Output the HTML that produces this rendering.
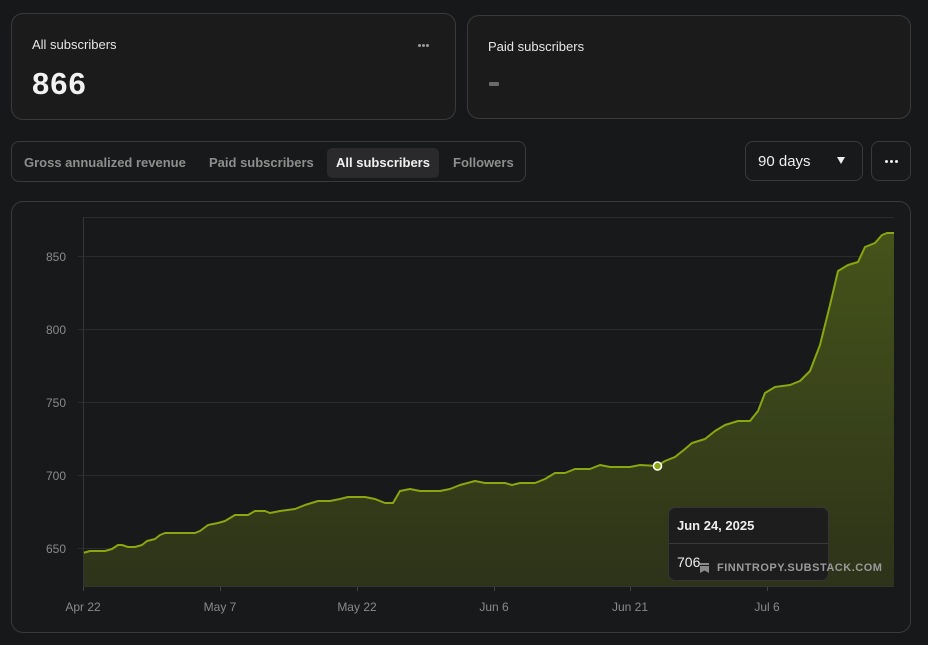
<!DOCTYPE html>
<html><head><meta charset="utf-8"><style>
*{box-sizing:border-box;margin:0;padding:0}
body{width:928px;height:645px;background:#17181a;font-family:"Liberation Sans",sans-serif;color:#e8e8e8;position:relative;overflow:hidden}
.card{position:absolute;border:1px solid #3a3a3c;border-radius:12px;background:#1b1b1c}
.abs{position:absolute}
.tab{position:absolute;top:6px;height:30px;line-height:30px;font-size:13px;color:#8e8e8e;font-weight:bold}
.dot{position:absolute;width:3px;height:3px;border-radius:50%}
</style></head><body>
<div class="card" style="left:11px;top:13px;width:445px;height:107px">
  <div class="abs" style="left:20px;top:23px;font-size:13px;color:#e6e6e6">All subscribers</div>
  <div class="dot" style="left:406px;top:30px;background:#999"></div>
  <div class="dot" style="left:410px;top:30px;background:#999"></div>
  <div class="dot" style="left:414px;top:30px;background:#999"></div>
  <div class="abs" style="left:20px;top:52px;font-size:31px;font-weight:bold;color:#f2f2f2;letter-spacing:1px">866</div>
</div>
<div class="card" style="left:467px;top:15px;width:444px;height:104px">
  <div class="abs" style="left:20px;top:23px;font-size:13px;color:#e6e6e6">Paid subscribers</div>
  <div class="abs" style="left:21px;top:66px;width:10px;height:4px;background:#6a6a6a;border-radius:1px"></div>
</div>
<div class="card" style="left:11px;top:141px;width:515px;height:41px;border-radius:8px;background:#18191a">
  <div class="tab" style="left:12px;width:165px">Gross annualized revenue</div>
  <div class="tab" style="left:197px">Paid subscribers</div>
  <div class="tab" style="left:315px;width:112px;background:#2a2a2c;border-radius:5px;color:#f0f0f0;text-align:center">All subscribers</div>
  <div class="tab" style="left:441px">Followers</div>
</div>
<div class="card" style="left:745px;top:141px;width:118px;height:40px;border-radius:8px;background:#18191a">
  <div class="abs" style="left:12px;top:11px;font-size:15px;color:#eee">90 days</div>
  <div class="abs" style="left:91px;top:15px;width:0;height:0;border-left:4.5px solid transparent;border-right:4.5px solid transparent;border-top:7px solid #eee"></div>
</div>
<div class="card" style="left:871px;top:141px;width:40px;height:40px;border-radius:8px;background:#18191a">
  <div class="dot" style="left:13px;top:18px;background:#eee"></div>
  <div class="dot" style="left:18px;top:18px;background:#eee"></div>
  <div class="dot" style="left:23px;top:18px;background:#eee"></div>
</div>
<div class="card" style="left:11px;top:201px;width:900px;height:432px;background:#18191a"></div>
<svg class="abs" style="left:0;top:0" width="928" height="645">
<defs><linearGradient id="g" x1="0" y1="0" x2="0" y2="1"><stop offset="0" stop-color="#46531a"/><stop offset="1" stop-color="#2d3319"/></linearGradient></defs>
<g stroke="#2a2b2c" stroke-width="1">
<line x1="83" y1="217.5" x2="894" y2="217.5"/>
<line x1="78" y1="256.5" x2="894" y2="256.5"/>
<line x1="78" y1="329.5" x2="894" y2="329.5"/>
<line x1="78" y1="402.5" x2="894" y2="402.5"/>
<line x1="78" y1="475.5" x2="894" y2="475.5"/>
<line x1="78" y1="548.5" x2="894" y2="548.5"/>
</g>
<polygon fill="url(#g)" points="83,586 83,553 90,551 105,551 112,549 118,545 122,545 128,547 135,547 142,545 147,541 155,539 160,535 165,533 195,533 200,531 208,525 218,523 225,521 235,515 248,515 255,511 265,511 270,513 280,511 295,509 305,505 318,501 330,501 340,499 348,497 365,497 375,499 385,503 393,503 400,491 410,489 420,491 440,491 450,489 460,485 475,481 485,483 505,483 512,485 520,483 535,483 545,479 555,473 565,473 575,469 590,469 600,465 610,467 630,467 640,465 657,466 665,461 675,457 685,449 692,443 705,439 715,431 725,425 738,421 750,421 758,411 765,393 775,387 790,385 800,381 810,371 820,345 830,305 838,271 848,265 858,262 865,247 875,243 882,235 887,233 894,233 894,586"/>
<polyline fill="none" stroke="#8aa610" stroke-width="2" stroke-linejoin="round" points="83,553 90,551 105,551 112,549 118,545 122,545 128,547 135,547 142,545 147,541 155,539 160,535 165,533 195,533 200,531 208,525 218,523 225,521 235,515 248,515 255,511 265,511 270,513 280,511 295,509 305,505 318,501 330,501 340,499 348,497 365,497 375,499 385,503 393,503 400,491 410,489 420,491 440,491 450,489 460,485 475,481 485,483 505,483 512,485 520,483 535,483 545,479 555,473 565,473 575,469 590,469 600,465 610,467 630,467 640,465 657,466 665,461 675,457 685,449 692,443 705,439 715,431 725,425 738,421 750,421 758,411 765,393 775,387 790,385 800,381 810,371 820,345 830,305 838,271 848,265 858,262 865,247 875,243 882,235 887,233 894,233"/>
<line x1="83.5" y1="217" x2="83.5" y2="587" stroke="#333436"/>
<line x1="83" y1="586.5" x2="894" y2="586.5" stroke="#333436"/>
<g stroke="#444" ><line x1="83.5" y1="587" x2="83.5" y2="591"/><line x1="220.5" y1="587" x2="220.5" y2="591"/><line x1="357.5" y1="587" x2="357.5" y2="591"/><line x1="494.5" y1="587" x2="494.5" y2="591"/><line x1="630.5" y1="587" x2="630.5" y2="591"/><line x1="767.5" y1="587" x2="767.5" y2="591"/></g>
<g font-family="Liberation Sans" font-size="12" fill="#8a8a8a" text-anchor="end">
<text x="66" y="261">850</text><text x="66" y="334">800</text><text x="66" y="407">750</text><text x="66" y="480">700</text><text x="66" y="553">650</text>
</g>
<g font-family="Liberation Sans" font-size="12" fill="#8a8a8a" text-anchor="middle">
<text x="83" y="611">Apr 22</text><text x="220" y="611">May 7</text><text x="357" y="611">May 22</text><text x="494" y="611">Jun 6</text><text x="630" y="611">Jun 21</text><text x="767" y="611">Jul 6</text>
</g>
<circle cx="657.5" cy="466" r="4" fill="#8aa610" stroke="#fff" stroke-width="1.6"/>
<rect x="668.5" y="507.5" width="160" height="73" rx="7" fill="#1d1d1e" stroke="#353537"/>
<line x1="669" y1="543.5" x2="828" y2="543.5" stroke="#3a3a3c"/>
<text x="677" y="530" font-family="Liberation Sans" font-size="13" font-weight="bold" fill="#eee">Jun 24, 2025</text>
<text x="677" y="567" font-family="Liberation Sans" font-size="14" fill="#eee">706</text>
<path d="M700 563h9v2h-9zM700 566h9v7l-4.5-2.5-4.5 2.5z" fill="#8a8a8a"/>
<text x="717" y="571" font-family="Liberation Sans" font-size="11" font-weight="bold" fill="#9a9a9a" letter-spacing="0.5">FINNTROPY.SUBSTACK.COM</text>
</svg>
</body></html>
